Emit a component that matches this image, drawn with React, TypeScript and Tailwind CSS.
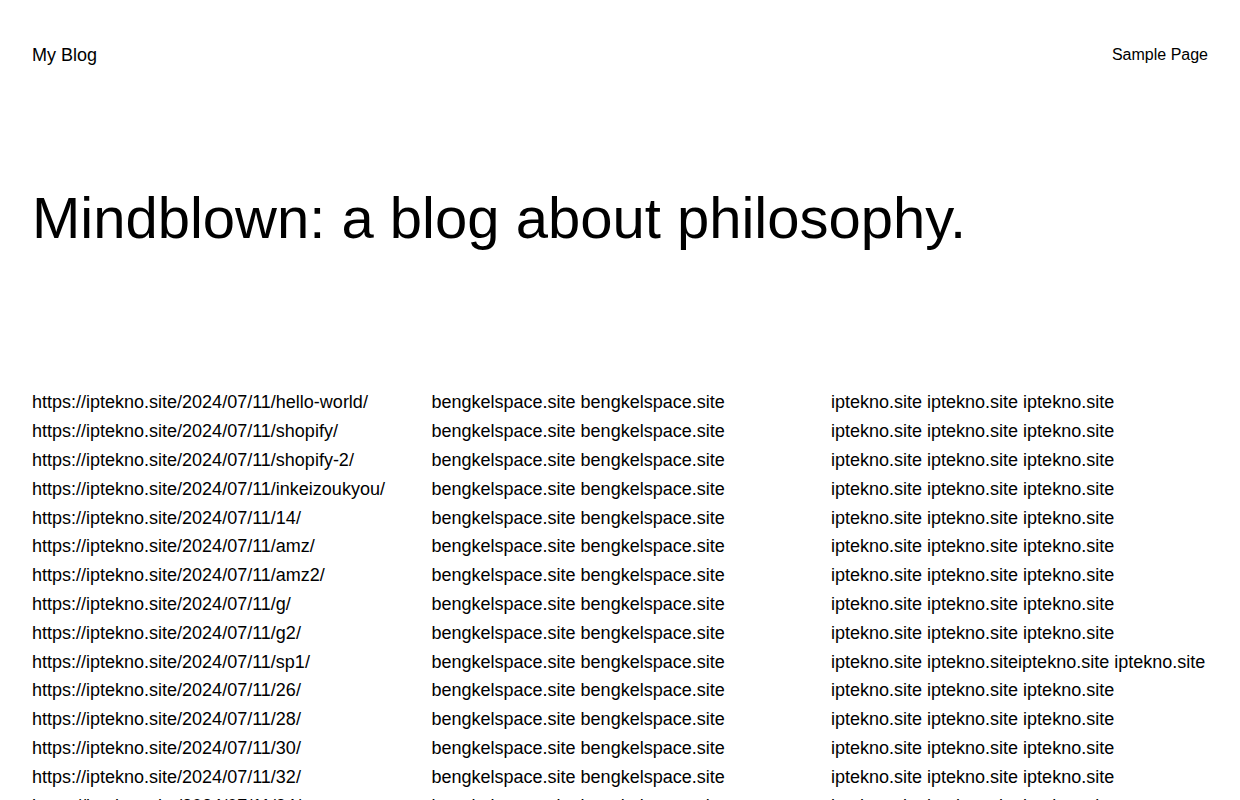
const posts = [
  'hello-world',
  'shopify',
  'shopify-2',
  'inkeizoukyou',
  '14',
  'amz',
  'amz2',
  'g',
  'g2',
  'sp1',
  '26',
  '28',
  '30',
  '32',
  '34',
  '36',
  '38',
];

function App() {
  return (
    <div
      className="min-h-screen bg-white text-black"
      style={{ fontFamily: '"Liberation Sans", Arial, sans-serif' }}
    >
      {/* header */}
      <header className="flex items-center justify-between px-8 pt-[41px]">
        <a className="text-[18px] leading-[28.8px]">My Blog</a>
        <nav className="text-[16px] leading-[28.8px]">
          <a>Sample Page</a>
        </nav>
      </header>

      {/* title */}
      <h1 className="px-8 pt-[113px] text-[58px] leading-[1.2] font-normal">
        Mindblown: a blog about philosophy.
      </h1>

      {/* link columns */}
      <main className="grid grid-cols-3 gap-[22.5px] px-8 pt-[136px] text-[18px] leading-[28.8px]">
        <div>
          {posts.map((p) => (
            <div key={p}>https://iptekno.site/2024/07/11/{p}/</div>
          ))}
        </div>
        <div>
          {posts.map((p) => (
            <div key={p}>bengkelspace.site bengkelspace.site</div>
          ))}
        </div>
        <div>
          {posts.map((p, i) => (
            <div key={p} className="whitespace-nowrap">
              {i === 9
                ? 'iptekno.site iptekno.siteiptekno.site iptekno.site'
                : 'iptekno.site iptekno.site iptekno.site'}
            </div>
          ))}
        </div>
      </main>
    </div>
  );
}

export default App;
